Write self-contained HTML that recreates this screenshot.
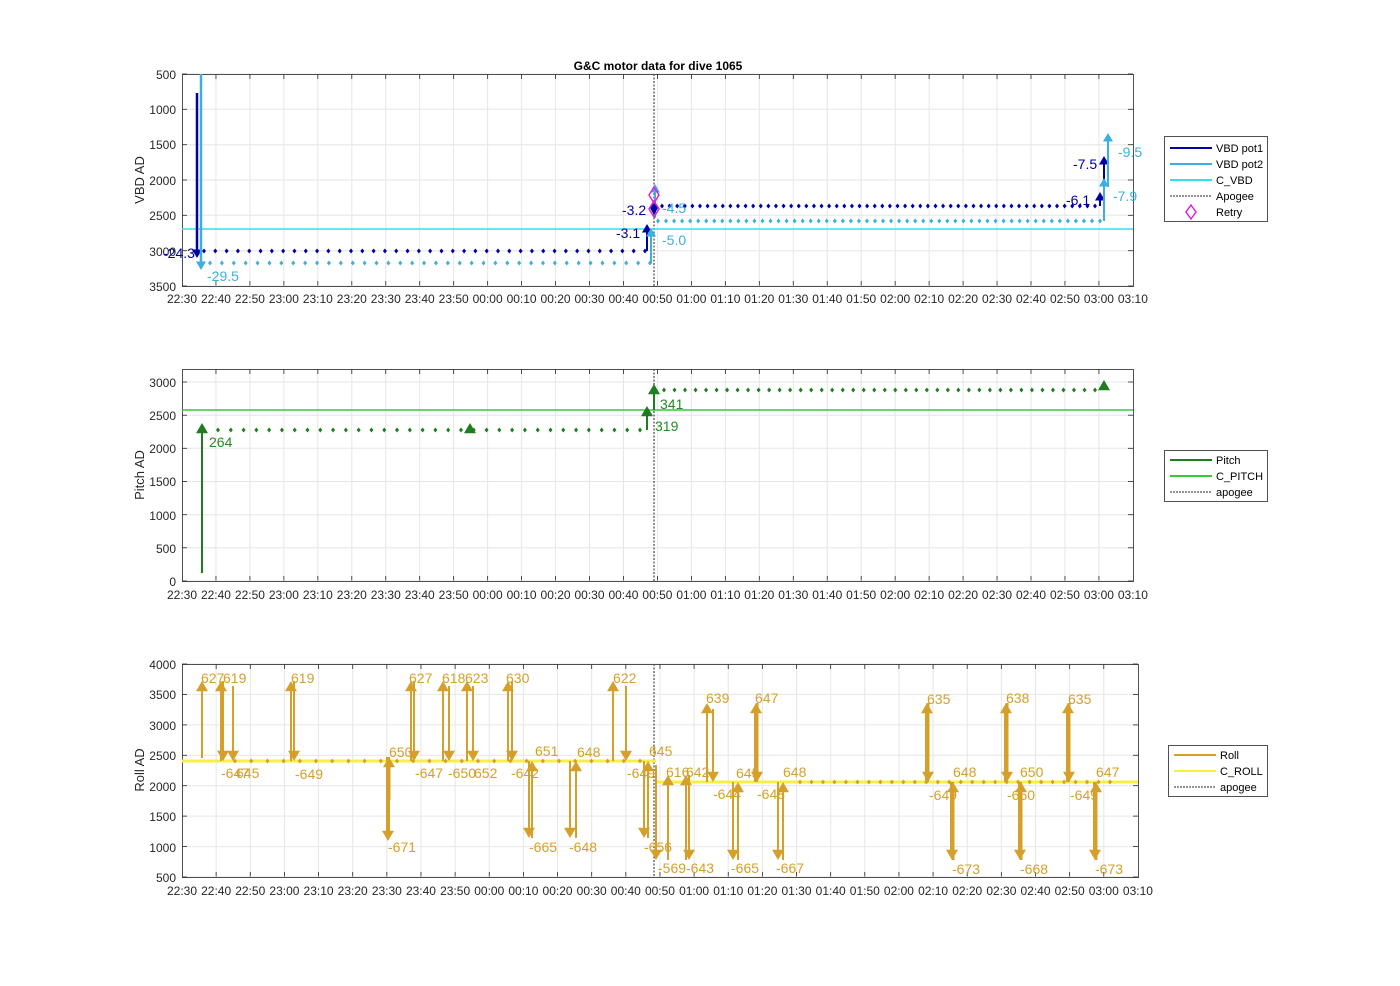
<!DOCTYPE html>
<html><head><meta charset="utf-8"><style>
html,body{margin:0;padding:0;background:#fff;}
svg{display:block;font-family:"Liberation Sans",Arial,sans-serif;}
.tk{font-size:12px;fill:#262626;}
.yl{font-size:13px;fill:#262626;}
.lg{font-size:11px;fill:#000;}
</style></head><body>
<svg id="s" width="1400" height="986" viewBox="0 0 1400 986" xmlns="http://www.w3.org/2000/svg">
<rect width="1400" height="986" fill="#fff"/>
<g id="bg"></g>
<text x="658" y="70" text-anchor="middle" style="font-size:12px;font-weight:bold" fill="#000">G&amp;C motor data for dive 1065</text>

<!-- y labels -->
<text class="yl" transform="translate(144,180) rotate(-90)" text-anchor="middle">VBD AD</text>
<text class="yl" transform="translate(144,475) rotate(-90)" text-anchor="middle">Pitch AD</text>
<text class="yl" transform="translate(144,770) rotate(-90)" text-anchor="middle">Roll AD</text>

<!-- top y ticks -->
<g class="tk" text-anchor="end">
<text x="176" y="79">500</text><text x="176" y="114">1000</text><text x="176" y="149">1500</text><text x="176" y="185">2000</text><text x="176" y="220">2500</text><text x="176" y="256">3000</text><text x="176" y="291">3500</text>
<text x="176" y="387">3000</text><text x="176" y="420">2500</text><text x="176" y="453">2000</text><text x="176" y="486">1500</text><text x="176" y="520">1000</text><text x="176" y="553">500</text><text x="176" y="586">0</text>
<text x="176" y="669">4000</text><text x="176" y="699">3500</text><text x="176" y="730">3000</text><text x="176" y="760">2500</text><text x="176" y="791">2000</text><text x="176" y="821">1500</text><text x="176" y="852">1000</text><text x="176" y="882">500</text>
</g>

<g class="tk xt" text-anchor="middle" data-y="303" data-x0="182" data-dx="33.96"><text>22:30</text><text>22:40</text><text>22:50</text><text>23:00</text><text>23:10</text><text>23:20</text><text>23:30</text><text>23:40</text><text>23:50</text><text>00:00</text><text>00:10</text><text>00:20</text><text>00:30</text><text>00:40</text><text>00:50</text><text>01:00</text><text>01:10</text><text>01:20</text><text>01:30</text><text>01:40</text><text>01:50</text><text>02:00</text><text>02:10</text><text>02:20</text><text>02:30</text><text>02:40</text><text>02:50</text><text>03:00</text><text>03:10</text></g>
<g class="tk xt" text-anchor="middle" data-y="599" data-x0="182" data-dx="33.96"><text>22:30</text><text>22:40</text><text>22:50</text><text>23:00</text><text>23:10</text><text>23:20</text><text>23:30</text><text>23:40</text><text>23:50</text><text>00:00</text><text>00:10</text><text>00:20</text><text>00:30</text><text>00:40</text><text>00:50</text><text>01:00</text><text>01:10</text><text>01:20</text><text>01:30</text><text>01:40</text><text>01:50</text><text>02:00</text><text>02:10</text><text>02:20</text><text>02:30</text><text>02:40</text><text>02:50</text><text>03:00</text><text>03:10</text></g>
<g class="tk xt" text-anchor="middle" data-y="895" data-x0="182" data-dx="34.14"><text>22:30</text><text>22:40</text><text>22:50</text><text>23:00</text><text>23:10</text><text>23:20</text><text>23:30</text><text>23:40</text><text>23:50</text><text>00:00</text><text>00:10</text><text>00:20</text><text>00:30</text><text>00:40</text><text>00:50</text><text>01:00</text><text>01:10</text><text>01:20</text><text>01:30</text><text>01:40</text><text>01:50</text><text>02:00</text><text>02:10</text><text>02:20</text><text>02:30</text><text>02:40</text><text>02:50</text><text>03:00</text><text>03:10</text></g>

<g id="fg"></g>

<!-- top annotations -->
<g style="font-size:14px">
<text x="163" y="258" fill="#0000a0">-24.3</text>
<text x="207" y="281" fill="#3bb0e0">-29.5</text>
<text x="622" y="215" fill="#0000a0">-3.2</text>
<text x="616" y="238" fill="#0000a0">-3.1</text>
<text x="662" y="213" fill="#3bb0e0">-4.5</text>
<text x="662" y="245" fill="#3bb0e0">-5.0</text>
<text x="1073" y="169" fill="#0000a0">-7.5</text>
<text x="1066" y="205" fill="#0000a0">-6.1</text>
<text x="1118" y="157" fill="#3bb0e0">-9.5</text>
<text x="1113" y="201" fill="#3bb0e0">-7.9</text>
</g>
<g style="font-size:14px" fill="#228b22">
<text x="209" y="447">264</text>
<text x="660" y="409">341</text>
<text x="655" y="431">319</text>
</g>
<g style="font-size:14px" fill="#d4a02a">
<text x="201" y="683">627</text><text x="223" y="683">619</text><text x="291" y="683">619</text>
<text x="409" y="683">627</text><text x="442" y="683">618</text><text x="465" y="683">623</text><text x="506" y="683">630</text><text x="613" y="683">622</text>
<text x="221" y="778">-647</text><text x="236" y="778">645</text><text x="295" y="779">-649</text>
<text x="389" y="757">650</text><text x="415" y="778">-647</text><text x="448" y="778">-650</text><text x="474" y="778">652</text><text x="511" y="778">-642</text>
<text x="535" y="756">651</text><text x="577" y="757">648</text><text x="627" y="778">-649</text><text x="649" y="756">645</text>
<text x="388" y="852">-671</text><text x="529" y="852">-665</text><text x="569" y="852">-648</text><text x="644" y="852">-656</text>
<text x="658" y="873">-569</text><text x="686" y="873">-643</text><text x="731" y="873">-665</text><text x="776" y="873">-667</text>
<text x="666" y="777">616</text><text x="686" y="777">642</text><text x="706" y="703">639</text><text x="713" y="799">-644</text>
<text x="736" y="778">645</text><text x="755" y="703">647</text><text x="757" y="799">-648</text><text x="783" y="777">648</text>
<text x="927" y="704">635</text><text x="929" y="800">-649</text><text x="953" y="777">648</text><text x="952" y="874">-673</text>
<text x="1006" y="703">638</text><text x="1007" y="800">-650</text><text x="1020" y="777">650</text><text x="1020" y="874">-668</text>
<text x="1068" y="704">635</text><text x="1070" y="800">-649</text><text x="1096" y="777">647</text><text x="1095" y="874">-673</text>
</g>

<!-- legends -->
<rect x="1164.5" y="136.5" width="103" height="85" fill="#fff" stroke="#262626" stroke-width="0.8"/>
<line x1="1170" y1="148" x2="1212" y2="148" stroke="#0000a0" stroke-width="2"/><text class="lg" x="1216" y="152">VBD pot1</text>
<line x1="1170" y1="164" x2="1212" y2="164" stroke="#3bb0e0" stroke-width="2"/><text class="lg" x="1216" y="168">VBD pot2</text>
<line x1="1170" y1="180" x2="1212" y2="180" stroke="#33e0e8" stroke-width="2"/><text class="lg" x="1216" y="184">C_VBD</text>
<line x1="1170" y1="196" x2="1212" y2="196" stroke="#555" stroke-width="1.2" stroke-dasharray="2,1"/><text class="lg" x="1216" y="200">Apogee</text>
<path d="M1191,205 L1196,212 L1191,219 L1186,212 Z" fill="none" stroke="#e020e0" stroke-width="1.5"/><text class="lg" x="1216" y="216">Retry</text>

<rect x="1164.5" y="450.5" width="103" height="51" fill="#fff" stroke="#262626" stroke-width="0.8"/>
<line x1="1170" y1="460" x2="1212" y2="460" stroke="#1e7d1e" stroke-width="2"/><text class="lg" x="1216" y="464">Pitch</text>
<line x1="1170" y1="476" x2="1212" y2="476" stroke="#33cc33" stroke-width="2"/><text class="lg" x="1216" y="480">C_PITCH</text>
<line x1="1170" y1="492" x2="1212" y2="492" stroke="#555" stroke-width="1.2" stroke-dasharray="2,1"/><text class="lg" x="1216" y="496">apogee</text>

<rect x="1168.5" y="745.5" width="99" height="51" fill="#fff" stroke="#262626" stroke-width="0.8"/>
<line x1="1174" y1="755" x2="1216" y2="755" stroke="#d4a02a" stroke-width="2"/><text class="lg" x="1220" y="759">Roll</text>
<line x1="1174" y1="771" x2="1216" y2="771" stroke="#f8f040" stroke-width="2"/><text class="lg" x="1220" y="775">C_ROLL</text>
<line x1="1174" y1="787" x2="1216" y2="787" stroke="#555" stroke-width="1.2" stroke-dasharray="2,1"/><text class="lg" x="1220" y="791">apogee</text>
</svg>
<script>
(function(){
var NS="http://www.w3.org/2000/svg",bg=document.getElementById('bg'),fg=document.getElementById('fg');
function el(p,t,a){var e=document.createElementNS(NS,t);for(var k in a)e.setAttribute(k,a[k]);p.appendChild(e);return e;}
document.querySelectorAll('.xt').forEach(function(g){var y=+g.dataset.y,x0=+g.dataset.x0,dx=+g.dataset.dx;
 g.querySelectorAll('text').forEach(function(t,i){t.setAttribute('x',x0+i*dx);t.setAttribute('y',y);});});
var axes=[{x0:182,x1:1133,y0:74,y1:286,dx:33.96,yt:[74,109.3,144.7,180,215.3,250.7,286]},
 {x0:182,x1:1133,y0:369,y1:581,dx:33.96,yt:[382,415.2,448.3,481.5,514.7,547.8,581]},
 {x0:182,x1:1138,y0:664,y1:877,dx:34.14,yt:[664,694.4,724.9,755.3,785.7,816.1,846.6,877]}];
axes.forEach(function(a){
 el(bg,'rect',{x:a.x0,y:a.y0,width:a.x1-a.x0,height:a.y1-a.y0,fill:'#fff'});
 for(var i=1;i<28;i++){var x=a.x0+i*a.dx;el(bg,'line',{x1:x,y1:a.y0,x2:x,y2:a.y1,stroke:'#e6e6e6','stroke-width':1});
  el(bg,'line',{x1:x,y1:a.y1,x2:x,y2:a.y1-5,stroke:'#262626','stroke-width':0.8});el(bg,'line',{x1:x,y1:a.y0,x2:x,y2:a.y0+5,stroke:'#262626','stroke-width':0.8});}
 a.yt.forEach(function(y){el(bg,'line',{x1:a.x0,y1:y,x2:a.x1,y2:y,stroke:'#e6e6e6'});
  el(bg,'line',{x1:a.x0,y1:y,x2:a.x0+5,y2:y,stroke:'#262626','stroke-width':0.8});el(bg,'line',{x1:a.x1,y1:y,x2:a.x1-5,y2:y,stroke:'#262626','stroke-width':0.8});});
 el(fg,'rect',{x:a.x0+.5,y:a.y0+.5,width:a.x1-a.x0,height:a.y1-a.y0,fill:'none',stroke:'#262626','stroke-width':0.8});
 el(fg,'line',{x1:654,y1:a.y0,x2:654,y2:a.y1,stroke:'#555','stroke-width':1.3,'stroke-dasharray':'2,1.5'});
});
function dots(c,xs,y){xs.forEach(function(x){el(fg,'path',{d:'M'+x+','+(y-2.5)+'l2,2.5l-2,2.5l-2,-2.5z',fill:c});});}
function range(a,b,n){var r=[];for(var i=0;i<n;i++)r.push(a+(b-a)*i/(n-1));return r;}
function arr(x,y1,y2,c,w,h){w=w||2;h=h||6;var d=y2>y1?1:-1;
 el(fg,'line',{x1:x,y1:y1,x2:x,y2:y2-d*h*1.4,stroke:c,'stroke-width':w});
 el(fg,'path',{d:'M'+(x-h)+','+(y2-d*h*1.7)+'L'+(x+h)+','+(y2-d*h*1.7)+'L'+x+','+y2+'Z',fill:c});}
// top
el(fg,'line',{x1:182,y1:229,x2:1133,y2:229,stroke:'#33e0e8','stroke-width':1.5});
var db='#0000a0',lb='#3bb0e0';
dots(db,range(204,645,40),251);dots(lb,range(210,650,38),263);
dots(db,range(662,1095,58),206);dots(lb,range(658,1100,56),221);
arr(197,93,258,db,2.5,5);arr(201,74,270,lb,2.5,5);
arr(647,251,224,db,2,5);arr(651,263,228,lb,2,5);arr(655,218,184,lb,2,5);
el(fg,'path',{d:'M654,201L658,208L654,215L650,208Z',fill:db});
el(fg,'path',{d:'M654,187L659,195L654,203L649,195Z',fill:'none',stroke:'#e020e0','stroke-width':1.5});
el(fg,'path',{d:'M654,201L659,209L654,217L649,209Z',fill:'none',stroke:'#e020e0','stroke-width':1.5});
arr(1100,206,192,db,2,5);arr(1104,192,156,db,2,5);arr(1104,221,178,lb,2,5);arr(1108,187,133,lb,2,5);
// middle
var g='#1e7d1e';
el(fg,'line',{x1:182,y1:410,x2:1133,y2:410,stroke:'#33cc33','stroke-width':1.5});
dots(g,range(218,640,34),430);dots(g,range(664,1095,42),390);
arr(202,573,423,g,2,6);arr(470,432,423,g,2,6);arr(647,430,406,g,2,6);arr(654,410,384,g,2,6);arr(1104,390,380,g,2,6);
// bottom
var o='#d4a02a';
el(fg,'line',{x1:182,y1:761,x2:656,y2:761,stroke:'#f8f040','stroke-width':3});
el(fg,'line',{x1:656,y1:782,x2:1138,y2:782,stroke:'#f8f040','stroke-width':3});
dots(o,range(235,640,26),761);dots(o,range(800,1110,28),782);
var A=[[202,758,681],[221,761,681],[223,681,761],[233,686,761],[291,761,681],[294,681,761],
[388,757,841,4],[389,800,757,3],[411,761,681],[414,681,761],[443,761,681],[449,686,761],[467,761,681],[473,686,761],
[508,761,681],[512,681,761],[529,761,838],[532,838,761],[570,761,838],[576,838,761],[613,761,681],[626,686,761],
[644,761,838],[648,838,761],[656,765,860],[668,860,775],[686,860,775],[689,775,860],[707,782,703],[713,709,782],
[733,782,860],[738,860,782],[756,782,703,4],[757,703,782,3],[778,782,860],[783,860,782],
[927,782,703,4],[928,703,782,3],[952,782,860,4],[953,860,782,3],[1006,782,703,4],[1007,703,782,3],
[1020,782,860,4],[1021,860,782,3],[1068,782,703,4],[1069,703,782,3],[1095,782,860,4],[1096,860,782,3]];
A.forEach(function(a){arr(a[0],a[1],a[2],o,a[3]||2,6);});
})();
</script>
</body></html>
